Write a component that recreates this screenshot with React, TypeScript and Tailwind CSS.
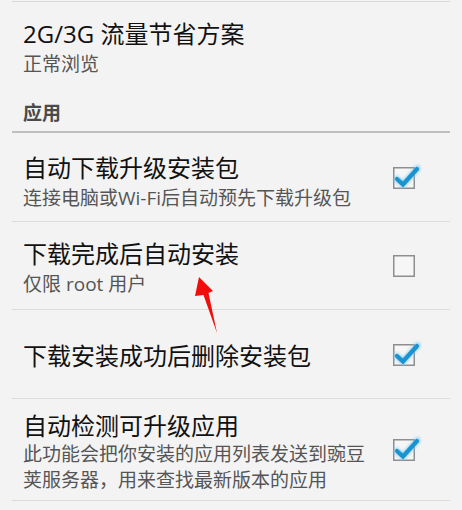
import React from 'react';

type Item = {
  title: string;
  lines: string[];
  checked: boolean;
  // row height and top padding, taken from the reference
  h: string;
  pt: string;
};

const items: Item[] = [
  { title: '自动下载升级安装包', lines: ['连接电脑或Wi-Fi后自动预先下载升级包'], checked: true, h: 'h-[88px]', pt: 'pt-[20px]' },
  { title: '下载完成后自动安装', lines: ['仅限 root 用户'], checked: false, h: 'h-[87px]', pt: 'pt-[17px]' },
  { title: '下载安装成功后删除安装包', lines: [], checked: true, h: 'h-[88px]', pt: 'pt-[31px]' },
  {
    title: '自动检测可升级应用',
    lines: ['此功能会把你安装的应用列表发送到豌豆', '荚服务器，用来查找最新版本的应用'],
    checked: true,
    h: 'h-[101px]',
    pt: 'pt-[12px]',
  },
];

const CheckBox: React.FC<{ checked: boolean }> = ({ checked }) => (
  <svg width="30" height="33" viewBox="0 0 30 33" className="shrink-0">
    <defs>
      <filter id="glow" x="-50%" y="-50%" width="200%" height="200%">
        <feGaussianBlur stdDeviation="1.6" />
      </filter>
    </defs>
    <rect x="1.75" y="6.75" width="20.5" height="20.5" fill="#f6f6f6" stroke="#8e8e8e" strokeWidth="1.5" />
    {checked && (
      <g>
        <path d="M5 18 L11 23.5 L25.5 7.5" fill="none" stroke="#7fc9ee" strokeWidth="6" strokeLinecap="round" strokeLinejoin="round" filter="url(#glow)" opacity="0.8" />
        <path d="M5 18 L11 23.5 L25 8" fill="none" stroke="#1a93d1" strokeWidth="4.2" strokeLinecap="round" strokeLinejoin="miter" />
      </g>
    )}
  </svg>
);

const Row: React.FC<{ item: Item }> = ({ item }) => (
  <div className={`${item.h} flex justify-between items-center pr-[28px]`}>
    <div className={`h-full w-[364px] pl-[11px] ${item.pt}`}>
      <div className="text-[24px] leading-[30px] text-[#111]">{item.title}</div>
      {item.lines.length > 0 && (
        <div className={`text-[19px] leading-[26px] text-[#555] ${item.lines.length > 1 ? 'mt-0' : 'mt-[2px]'}`}>
          {item.lines.map((l) => (
            <div key={l} className="whitespace-nowrap">{l}</div>
          ))}
        </div>
      )}
    </div>
    <CheckBox checked={item.checked} />
  </div>
);

export default function App() {
  return (
    <div
      className="relative w-[462px] h-[510px] overflow-hidden bg-[#f3f3f3]"
      style={{ fontFamily: "'Open Sans', 'Noto Sans CJK SC', sans-serif" }}
    >
      <div className="mx-[12px] pt-[1px]">
        <div className="h-px bg-[#d9d9d9]" />

        {/* 2G/3G */}
        <div className="pl-[11px] pt-[17px]">
          <div className="text-[24px] leading-[30px] text-[#111]">2G/3G 流量节省方案</div>
          <div className="mt-[2px] text-[19px] leading-[26px] text-[#555]">正常浏览</div>
        </div>

        {/* section header */}
        <div className="pl-[11px] mt-[23px] text-[19px] leading-[26px] font-bold text-[#4a4a4a]">应用</div>
        <div className="mt-[5px] h-[2px] bg-[#bfbfbf]" />

        {items.map((it) => (
          <div key={it.title}>
            <Row item={it} />
            <div className="h-px bg-[#dcdcdc]" />
          </div>
        ))}
      </div>

      {/* red annotation arrow */}
      <svg className="absolute left-0 top-0 pointer-events-none" width="462" height="510">
        <polygon points="199,277 213,291 208.5,293 217,333 203.5,295 195,296" fill="#f20d0d" />
      </svg>
    </div>
  );
}
